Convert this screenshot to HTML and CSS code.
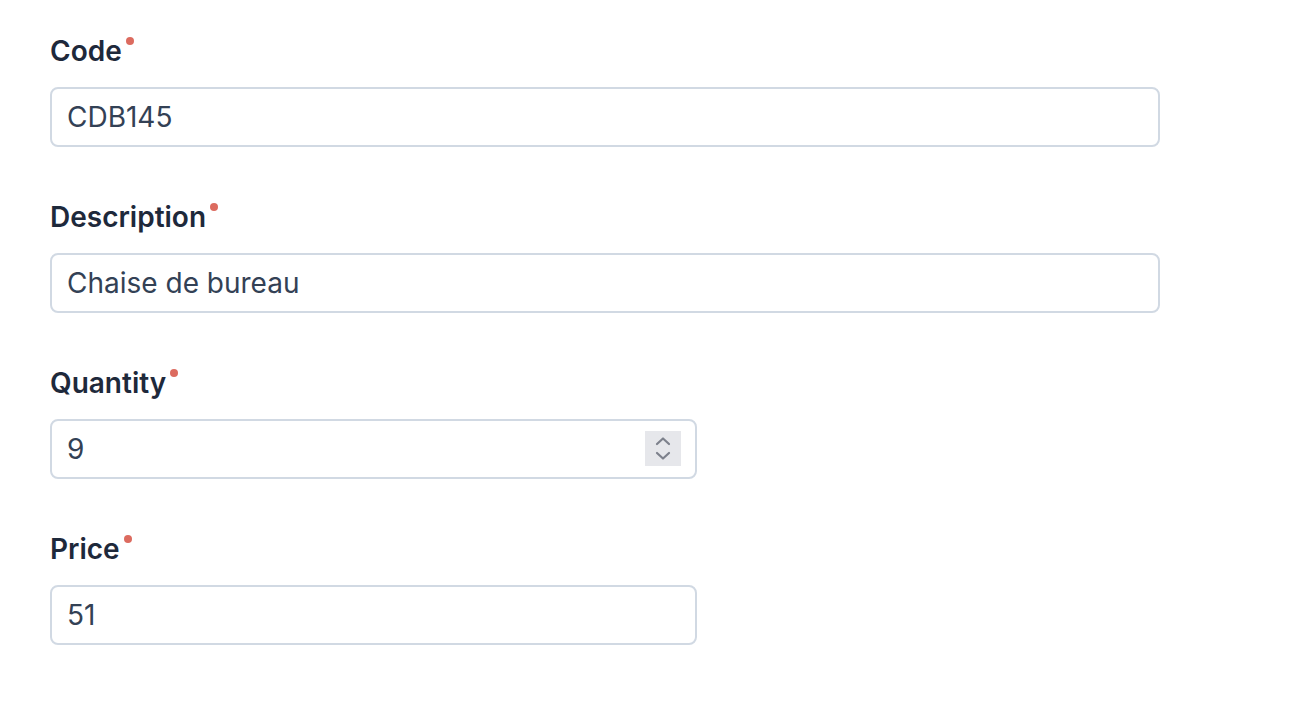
FILE: index.html
```html
<!DOCTYPE html>
<html lang="en">
<head>
<meta charset="utf-8">
<title>Form</title>
<link rel="stylesheet" href="styles.css">
</head>
<body>
<form class="form">
  <div class="field">
    <label class="label" for="code">Code<span class="req"></span></label>
    <input class="input wide" id="code" type="text" value="CDB145">
  </div>
  <div class="field">
    <label class="label" for="desc">Description<span class="req"></span></label>
    <input class="input wide" id="desc" type="text" value="Chaise de bureau">
  </div>
  <div class="field">
    <label class="label" for="qty">Quantity<span class="req"></span></label>
    <div class="number-wrap">
      <input class="input narrow" id="qty" type="text" value="9">
      <span class="spinner" aria-hidden="true">
        <svg width="36" height="35" viewBox="0 0 36 35">
          <path d="M12 13 L18 7.5 L24 13" fill="none" stroke="#7d818c" stroke-width="2.2" stroke-linecap="round" stroke-linejoin="round"/>
          <path d="M12 22 L18 27.5 L24 22" fill="none" stroke="#7d818c" stroke-width="2.2" stroke-linecap="round" stroke-linejoin="round"/>
        </svg>
      </span>
    </div>
  </div>
  <div class="field">
    <label class="label" for="price">Price<span class="req"></span></label>
    <input class="input narrow" id="price" type="text" value="51">
  </div>
</form>
</body>
</html>
```

FILE: styles.css
```css
html, body {
  margin: 0;
  padding: 0;
  background: #ffffff;
}

body {
  font-family: Inter, "Noto Sans", "Liberation Sans", sans-serif;
}

.form {
  display: flex;
  flex-direction: column;
  gap: 49px;
  padding: 30px 0 0 50px;
}

.field {
  display: flex;
  flex-direction: column;
  gap: 17px;
}

.label {
  display: flex;
  align-items: flex-start;
  font-size: 28px;
  line-height: 42px;
  height: 40px;
  font-weight: 600;
  color: #1e293b;
}

.req {
  width: 8px;
  height: 8px;
  border-radius: 50%;
  background: #dc6b5f;
  margin-left: 4px;
  margin-top: 7px;
}

.input {
  box-sizing: border-box;
  height: 60px;
  border: 2px solid #d1d9e3;
  border-radius: 8px;
  padding: 0 15px;
  font-family: Inter, "Noto Sans", "Liberation Sans", sans-serif;
  font-size: 28px;
  color: #334155;
  background: #ffffff;
  outline: none;
}

.wide {
  width: 1110px;
}

.narrow {
  width: 647px;
}

.number-wrap {
  position: relative;
  width: 647px;
  height: 60px;
}

.spinner {
  position: absolute;
  top: 12px;
  right: 16px;
  width: 36px;
  height: 35px;
  background: #e6e7eb;
  display: block;
}

.spinner svg {
  display: block;
}
```
